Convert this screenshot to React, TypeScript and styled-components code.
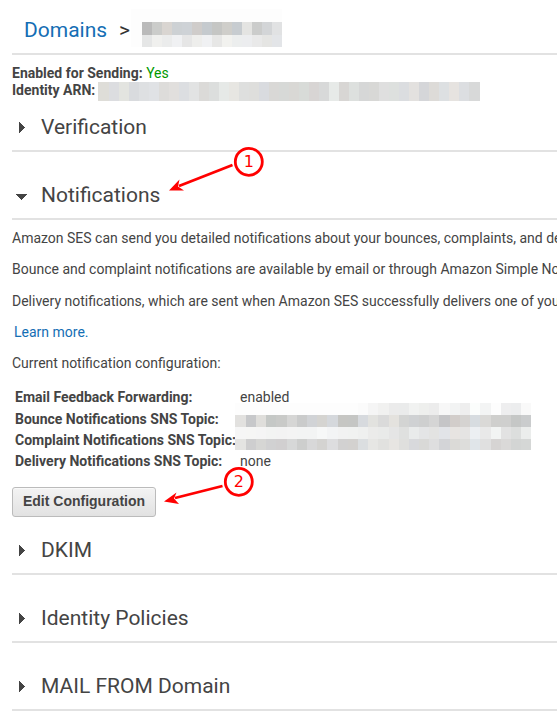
import React from "react";
import styled, { createGlobalStyle } from "styled-components";

const GlobalStyle = createGlobalStyle`
  * { box-sizing: border-box; }
  html, body { margin: 0; background: #fff; overflow: hidden; }
  body { font: 14px/17px Roboto, sans-serif; color: #444; }
`;

const Page = styled.main`
  position: relative;
  width: 557px;
  height: 718px;
  padding-left: 12px;
  overflow: hidden;
`;

const Breadcrumb = styled.header`
  display: flex;
  align-items: flex-start;
  height: 55px;
  padding: 9px 0 0 12px;
  border-bottom: 2px solid #e2e2e2;
  font-size: 21px;
  line-height: 42px;
`;

const DomainLink = styled.a`
  width: 95px;
  color: #146eb4;
`;

const Separator = styled.span`
  width: 12px;
  font-size: 21px;
  color: #333;
`;

const DomainMask = styled.div`
  width: 151px;
  height: 38px;
  padding: 13px 0 0 11px;
  background: #fdfdfd;
`;

const Mosaic = styled.div<{ $columns: string; $rows: string }>`
  display: grid;
  flex: none;
  grid-template-columns: ${(p) => p.$columns};
  grid-template-rows: ${(p) => p.$rows};
`;

const Cell = styled.i<{ $color: string }>`
  background: ${(p) => p.$color};
`;

const Summary = styled.section`
  height: 48px;
  padding-top: 10px;
`;

const SummaryLine = styled.div`
  display: flex;
  height: 17px;
  white-space: pre;
`;

const SummaryLabel = styled.b<{ $width?: number }>`
  width: ${(p) => (p.$width ? `${p.$width}px` : "auto")};
`;

const Status = styled.span`
  color: #090;
`;

const SectionHeader = styled.h2<{ $height: number }>`
  display: flex;
  align-items: flex-end;
  height: ${(p) => p.$height}px;
  margin: 0;
  padding-bottom: 11px;
  border-bottom: 2px solid #e2e2e2;
  font-size: 21px;
  font-weight: 400;
  line-height: 24px;
`;

const Disclosure = styled.svg`
  width: 29px;
  height: 24px;
  flex: none;
  fill: #444;
`;

const Paragraph = styled.p<{ $height: number }>`
  height: ${(p) => p.$height}px;
  margin: 0;
  white-space: nowrap;
`;

const Details = styled.section`
  height: 267px;
  padding-top: 10px;
`;

const LearnMore = styled.a`
  margin-left: 2px;
  color: #146eb4;
`;

const Configuration = styled.div`
  position: relative;
  display: grid;
  grid-template-columns: 225px 1fr;
  grid-template-rows: 22px 21px 21px 21px;
  height: 98px;
  padding-left: 3px;
`;

const ConfigLabel = styled.b`
  white-space: nowrap;
`;

const TopicMask = styled.div`
  position: absolute;
  left: 223px;
  top: 14px;
`;

const Button = styled.button`
  display: flex;
  align-items: center;
  justify-content: center;
  width: 144px;
  height: 30px;
  padding: 0 0 1px;
  border: 1px solid #bbb;
  border-radius: 3px;
  background: linear-gradient(#f3f3f3, #e2e2e2);
  box-shadow: inset 0 1px #fff8;
  color: #444;
  font: bold 14px/17px "Liberation Sans", sans-serif;
`;

const Annotation = styled.svg`
  position: absolute;
  left: 0;
  top: 0;
  width: 557px;
  height: 718px;
  pointer-events: none;
  font: 16px "DejaVu Sans", sans-serif;
`;

const domainColors =
  "bababa cbccca d9d5d1 cdd1d4 ced2d6 cfccca c5cace c5c6c4 cfceca c7ccd0 e4e4e2 cbcccb d3d5d7 e1e2e3 e5e6e6 f0f0ee ebecec f0f1f3 e6e6e6 eeeeec f0f1f3 e7e7e6 f2f2ef eceeee ecedef e9e9e9 e5e5e3 e3e5e8".split(" ");

const arnColors =
  "deddd8 dcdde0 e3e4e0 d9dbde dee0e2 e0e2e5 dddcda e1dfdd dcdee1 e2e3e3 dbdad8 dcdedd e6e9e7 e7e6e2 dedfde dededc d9dbdf d9d8d6 d7d9d7 d9d8d5 d8dbd8 d8d5d4 d8d9d9 e7eae8 d8d6d4 dde0de d6d7d7 d8d8d6 dfdfdf dde0de dbdde0 e3e1df d5d6d9 dddbd8 dde0e2 e6e3e0 dcdee1 d8d9d9".split(" ");

const topicColors = [
  "fdfdfd fdfdfd fdfdfd fdfdfd fdfdfd fdfdfd fdfdfd fdfdfd fdfdfd fdfdfd fdfdfd fdfdfd fbfbfb f5f5f5 f1f1f0 ebebeb eaebeb f1f2f1 eeefed ececec f7f7f7 f2f3f3 eeeeee fbfdfc f3f4f4 fdfdfd eeeeef ecedee f9f9f9",
  "e2e1df c7c8ca dfdedb c5c8c6 c9cac8 d6d6d5 cacbcb d1d3d6 d5d4d1 d5d8dc c6c6c3 c5c6c4 d7dade e2e2df dadada e4e2de d3d4d3 cfd1d3 cecfcf d5d5d5 c5c5c7 d2cdca d5d3d1 d7dce0 dad9d7 cfcfcd cfcfce c5c7c6 cacccd",
  "f6f6f6 f6f6f5 f5f5f5 f3f4f3 f3f3f3 f4f4f4 f3f4f4 f3f4f4 f7f8f8 f3f4f5 f2f2f2 f1f2f1 eff0ef ebebea e9eae9 e5e5e5 dfe0df e9ebeb e4e5e6 e3e3e2 e2e4e8 e7e4e1 e5e4e3 eceff2 e9e9e9 f2f4f3 e2e2e2 dcdedd ebedec",
  "e4e4e2 cececf d6d6d4 d1d1d2 d1cfd0 d7d8d8 cdcecd d8d8d9 d4d3d1 dddddf d2d1d1 d3d1cf dbdee0 e6e6e4 e1e1df e7e5e2 dfdfdd d8d9dc d9d9d7 dededf d3d4d7 dbdad7 dddddb e0e5e9 e0e0e0 d6d4d3 dad9d8 d3d5d4 d5d7d6",
]
  .join(" ")
  .split(" ");

function MaskedText({ colors, columns, rows }: { colors: string[]; columns: string; rows: string }) {
  return (
    <Mosaic $columns={columns} $rows={rows}>
      {colors.map((color, i) => (
        <Cell key={i} $color={`#${color}`} />
      ))}
    </Mosaic>
  );
}

function Section({ title, height, open = false }: { title: string; height: number; open?: boolean }) {
  return (
    <SectionHeader $height={height}>
      <Disclosure viewBox="0 0 29 24" shapeRendering="crispEdges">
        <path d={open ? "M4 11H15L9.5 17Z" : "M7 7V18L13 12.5Z"} />
      </Disclosure>
      {title}
    </SectionHeader>
  );
}

export default function App() {
  return (
    <>
      <GlobalStyle />
      <Page>
        <Breadcrumb>
          <DomainLink>Domains</DomainLink>
          <Separator>&gt;</Separator>
          <DomainMask>
            <MaskedText colors={domainColors} columns="repeat(14, 10px)" rows="13px 12px" />
          </DomainMask>
        </Breadcrumb>
        <Summary>
          <SummaryLine>
            <SummaryLabel>Enabled for Sending: </SummaryLabel>
            <Status>Yes</Status>
          </SummaryLine>
          <SummaryLine>
            <SummaryLabel $width={86}>Identity ARN:</SummaryLabel>
            <MaskedText colors={arnColors} columns="11px repeat(36, 10px) 11px" rows="19px" />
          </SummaryLine>
        </Summary>
        <Section title="Verification" height={49} />
        <Section title="Notifications" height={68} open />
        <Details>
          <Paragraph $height={31}>
            Amazon SES can send you detailed notifications about your bounces, complaints, and deliveries.
          </Paragraph>
          <Paragraph $height={32}>
            Bounce and complaint notifications are available by email or through Amazon Simple Notification Service.
          </Paragraph>
          <Paragraph $height={31}>
            Delivery notifications, which are sent when Amazon SES successfully delivers one of your emails.
          </Paragraph>
          <Paragraph $height={31}>
            <LearnMore>Learn more.</LearnMore>
          </Paragraph>
          <Paragraph $height={34}>Current notification configuration:</Paragraph>
          <Configuration>
            <ConfigLabel>Email Feedback Forwarding:</ConfigLabel>
            <span>enabled</span>
            <ConfigLabel>Bounce Notifications SNS Topic:</ConfigLabel>
            <span />
            <ConfigLabel>Complaint Notifications SNS Topic:</ConfigLabel>
            <span />
            <ConfigLabel>Delivery Notifications SNS Topic:</ConfigLabel>
            <span>none</span>
            <TopicMask>
              <MaskedText
                colors={topicColors}
                columns="11px 10px 10px 10px 11px repeat(4, 10px) 11px repeat(4, 10px) 11px repeat(5, 10px) 11px repeat(3, 10px) 11px repeat(4, 10px)"
                rows="12px 12px 12px 11px"
              />
            </TopicMask>
          </Configuration>
        </Details>
        <Button>Edit Configuration</Button>
        <Section title="DKIM" height={58} />
        <Section title="Identity Policies" height={68} />
        <Section title="MAIL FROM Domain" height={68} />
        <Annotation viewBox="0 0 557 718">
          <g fill="none" stroke="#f00" strokeWidth="2.8">
            <circle cx="248.8" cy="161.8" r="13.5" fill="#fff" />
            <path d="M232.5 165L179 186" />
            <circle cx="238.8" cy="481.8" r="13.5" fill="#fff" />
            <path d="M222.5 486L175 498" />
          </g>
          <path fill="#f00" d="M169 190.5L179.5 179.5L178 186.5L184 190.5Z" />
          <path fill="#f00" d="M164 501.5L176.5 492.5L174 498.5L179 504Z" />
          <g fill="#f00" textAnchor="middle">
            <text x="248.8" y="167">1</text>
            <text x="238.8" y="487">2</text>
          </g>
        </Annotation>
      </Page>
    </>
  );
}
